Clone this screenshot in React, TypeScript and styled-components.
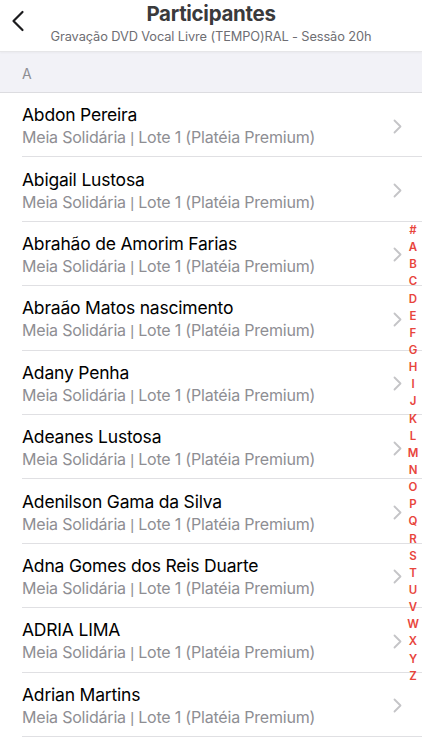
import styled, { createGlobalStyle } from 'styled-components'

const GlobalStyle = createGlobalStyle`
  html, body {
    margin: 0;
    padding: 0;
    background: #ffffff;
    font-family: Inter, "Noto Sans", sans-serif;
    -webkit-font-smoothing: antialiased;
  }
`

const participants = [
  'Abdon Pereira',
  'Abigail Lustosa',
  'Abrahão de Amorim Farias',
  'Abraão Matos nascimento',
  'Adany Penha',
  'Adeanes Lustosa',
  'Adenilson Gama da Silva',
  'Adna Gomes dos Reis Duarte',
  'ADRIA LIMA',
  'Adrian Martins',
]

const letters = '#ABCDEFGHIJKLMNOPQRSTUVWXYZ'.split('')

function BackIcon() {
  return (
    <svg width="14" height="22" viewBox="0 0 14 22" fill="none">
      <path d="M11.5 2 L2.5 11 L11.5 20" stroke="#1c1c1e" strokeWidth="2.2" strokeLinecap="round" strokeLinejoin="round" />
    </svg>
  )
}

function Chevron() {
  return (
    <svg width="9" height="15" viewBox="0 0 9 15" fill="none">
      <path d="M1.5 1.5 L7.5 7.5 L1.5 13.5" stroke="#c4c4c7" strokeWidth="1.8" strokeLinecap="round" strokeLinejoin="round" />
    </svg>
  )
}

function Row({ name }: { name: string }) {
  return (
    <RowWrap>
      <RowText>
        <Name>{name}</Name>
        <Ticket>
          Meia Solidária <Pipe>|</Pipe> Lote 1 (Platéia Premium)
        </Ticket>
      </RowText>
      <Chevron />
    </RowWrap>
  )
}

export default function App() {
  return (
    <Page>
      <GlobalStyle />
      <Header>
        <BackButton>
          <BackIcon />
        </BackButton>
        <Title>Participantes</Title>
        <Subtitle>Gravação DVD Vocal Livre (TEMPO)RAL - Sessão 20h</Subtitle>
      </Header>
      <Section>A</Section>
      <List>
        {participants.map((p) => (
          <Row key={p} name={p} />
        ))}
      </List>
      <Index>
        {letters.map((l) => (
          <IndexLetter key={l}>{l}</IndexLetter>
        ))}
      </Index>
    </Page>
  )
}

const Page = styled.div`
  position: relative;
  width: 422px;
  height: 750px;
  overflow: hidden;
  background: #ffffff;
`

const Header = styled.header`
  position: relative;
  height: 52px;
  box-sizing: border-box;
  display: flex;
  flex-direction: column;
  align-items: center;
  padding-top: 1px;
  background: #ffffff;
  border-bottom: 1px solid #e6e6e8;
  box-shadow: 0 1px 2px rgba(0, 0, 0, 0.04);
`

const BackButton = styled.div`
  position: absolute;
  left: 11px;
  top: 10px;
  display: flex;
`

const Title = styled.div`
  font-size: 20.5px;
  font-weight: 700;
  color: #3a3a3c;
  line-height: 26px;
  letter-spacing: -0.3px;
`

const Subtitle = styled.div`
  font-size: 12.8px;
  color: #6e6e73;
  line-height: 18px;
  margin-top: 1px;
  letter-spacing: -0.1px;
`

const Section = styled.div`
  height: 41px;
  box-sizing: border-box;
  display: flex;
  align-items: center;
  padding-left: 22px;
  padding-top: 2px;
  background: #f2f2f7;
  border-bottom: 1px solid #dcdce0;
  font-size: 14px;
  color: #8e8e93;
`

const List = styled.div`
  display: flex;
  flex-direction: column;
`

const RowWrap = styled.div`
  height: 64.4px;
  box-sizing: border-box;
  margin-left: 22px;
  padding-right: 20px;
  padding-top: 3px;
  display: flex;
  align-items: center;
  border-bottom: 1px solid #e0e0e3;
`

const RowText = styled.div`
  flex: 1;
  display: flex;
  flex-direction: column;
  gap: 1px;
`

const Name = styled.div`
  font-size: 17.5px;
  color: #000000;
  line-height: 22px;
  letter-spacing: -0.2px;
`

const Ticket = styled.div`
  font-size: 16px;
  color: #8e8e93;
  line-height: 21px;
  letter-spacing: -0.2px;
`

const Pipe = styled.span`
  font-family: "Liberation Sans", Arial, sans-serif;
  font-size: 15px;
`

const Index = styled.div`
  position: absolute;
  right: 1px;
  top: 222px;
  width: 16px;
  display: flex;
  flex-direction: column;
  align-items: center;
`

const IndexLetter = styled.div`
  height: 17.15px;
  line-height: 17.15px;
  font-size: 11.5px;
  font-weight: 600;
  color: #e8453c;
  width: 16px;
  text-align: center;
`
